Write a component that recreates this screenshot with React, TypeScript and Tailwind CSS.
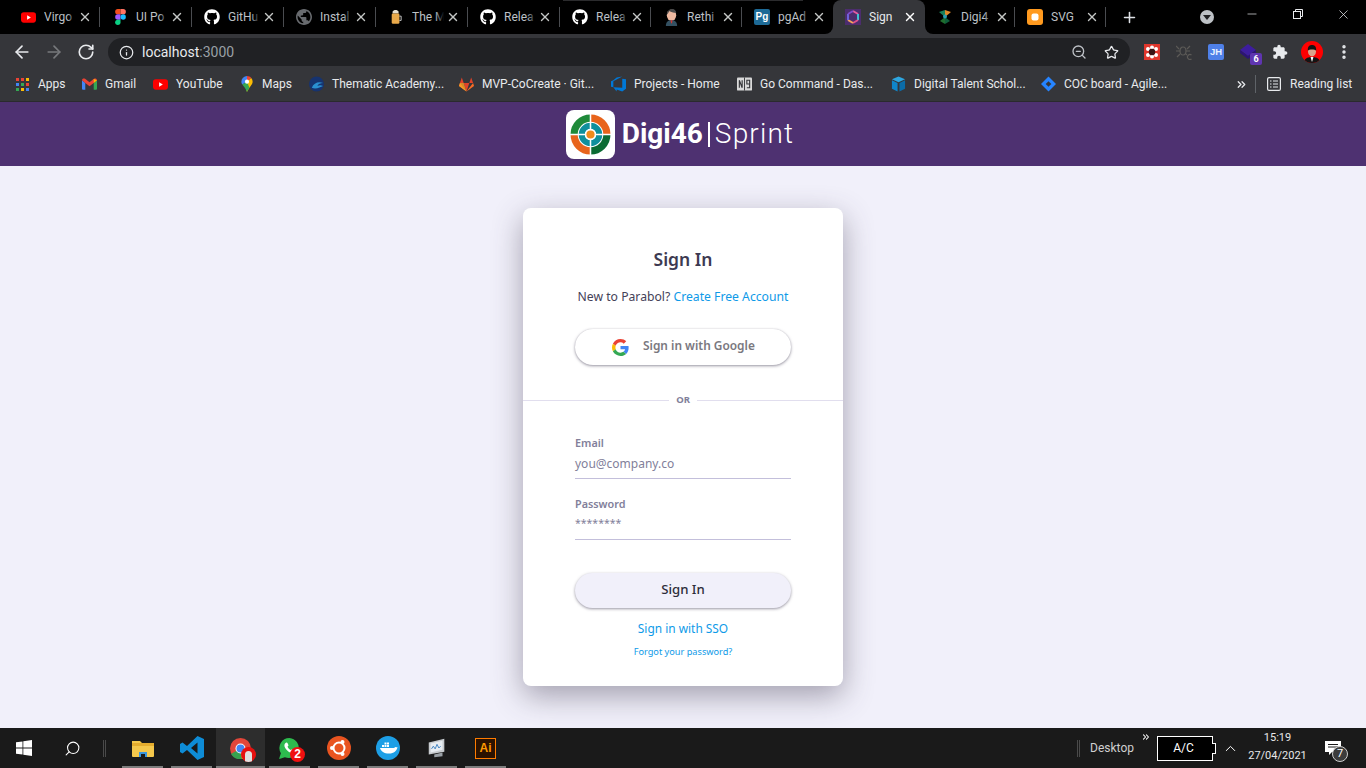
import { ArrowLeft, ArrowRight, RotateCw, Info, Search, ZoomOut, Star, EllipsisVertical, X, Plus, Minus, ChevronUp, ChevronsRight } from "lucide-react";
import { FaGithub } from "react-icons/fa";
import type { ReactNode } from "react";

const Youtube = () => (
    <svg viewBox="0 0 16 16" className="w-[15px] h-[15px]">
        <rect x="0" y="2.500" width="16" height="11" rx="3" fill="#f00" />
        <path d="M6.500 5.500v5l4-2.500z" fill="#fff" />
    </svg>
);

const Figma = () => (
    <svg viewBox="0 0 12 18" className="w-[11px] h-[16px]">
        <path d="M3 0h3v6H3a3 3 0 010-6z" fill="#f24e1e" />
        <path d="M6 0h3a3 3 0 010 6H6z" fill="#ff7262" />
        <path d="M3 6h3v6H3a3 3 0 010-6z" fill="#a259ff" />
        <circle cx="9" cy="9" r="3" fill="#1abcfe" />
        <path d="M3 12h3v3a3 3 0 11-3-3z" fill="#0acf83" />
    </svg>
);

const PublicGlobe = () => (
    <svg viewBox="2 2 20 20" className="w-4 h-4" fill="#686b6f">
        <path d="M12 2C6.480 2 2 6.480 2 12s4.480 10 10 10 10-4.480 10-10S17.520 2 12 2zm-1 17.930c-3.950-.490-7-3.850-7-7.930 0-.620.080-1.210.210-1.790L9 15v1c0 1.100.900 2 2 2v1.930zm6.900-2.540c-.260-.810-1-1.390-1.900-1.390h-1v-3c0-.550-.450-1-1-1H8v-2h2c.550 0 1-.450 1-1V7h2c1.100 0 2-.900 2-2v-.410c2.930 1.190 5 4.060 5 7.410 0 2.080-.800 3.970-2.100 5.390z" />
    </svg>
);

const Beer = () => (
    <svg viewBox="0 0 14 18" className="w-[12px] h-[16px]">
        <path d="M3 3c1-3 6-3 7 0v2H3z" fill="#e8e0d0" />
        <rect x="2" y="5" width="9" height="12" rx="1.500" fill="#e9a94a" />
        <path d="M11 8h2v5h-2" fill="none" stroke="#ddd" strokeWidth="1" />
    </svg>
);

const Jenkins = () => (
    <svg viewBox="0 0 16 18" className="w-[15px] h-[17px]">
        <ellipse cx="8" cy="6.500" rx="5" ry="6" fill="#eeb9a0" />
        <path d="M3 6c0-4 3-6 6-6s4 3 4 4c-3 0-6-1-7-2-1 1-2 3-3 4z" fill="#4a4a4a" />
        <path d="M2 18c0-4 2-6 6-6s6 2 6 6z" fill="#335061" />
        <path d="M7 12h2l-.5 3h-1z" fill="#d33833" />
    </svg>
);

const PgAdmin = () => (
    <span className="w-4 h-4 rounded-[2px] bg-[#1d6a96] text-white text-[10px] leading-4 font-bold text-center font-['Liberation_Sans',sans-serif]">Pg</span>
);

const ParabolMark = () => (
    <svg viewBox="0 0 16 16" className="w-4 h-4">
        <rect width="16" height="16" fill="#4c2d6e" />
        <path d="M8 2l5 3" stroke="#e55ca0" strokeWidth="2" fill="none" />
        <path d="M13 5v6" stroke="#3fc1d0" strokeWidth="2" fill="none" />
        <path d="M13 11l-5 3" stroke="#e0518a" strokeWidth="2" fill="none" />
        <path d="M8 14l-5-3" stroke="#f5a25d" strokeWidth="2" fill="none" />
        <path d="M3 11V5" stroke="#6e63d9" strokeWidth="2" fill="none" />
        <path d="M3 5l5-3" stroke="#7f4cc9" strokeWidth="2" fill="none" />
    </svg>
);

const DigiLeaf = () => (
    <svg viewBox="0 0 16 16" className="w-4 h-4">
        <path d="M8 8L2 3l6-2z" fill="#1a7f5a" />
        <path d="M8 8l6-5-6-2z" fill="#e08a2b" />
        <path d="M8 8L3 12l5 3z" fill="#1f6e2e" />
        <path d="M8 8l5 4-5 3z" fill="#0f5f3a" />
        <circle cx="8" cy="7.500" r="2" fill="#2a9db0" />
    </svg>
);

const SvgIcon = () => (
    <svg viewBox="0 0 16 16" className="w-4 h-4">
        <rect width="16" height="16" rx="3" fill="#ff9a1f" />
        <rect x="4.500" y="4.500" width="7" height="7" rx="2" fill="#fff" />
    </svg>
);

const Gmail = () => (
    <svg viewBox="0 0 16 12" className="w-[15px] h-[12px]">
        <path d="M0 2v9a1 1 0 001 1h2.500V5z" fill="#4285f4" />
        <path d="M16 2v9a1 1 0 01-1 1h-2.500V5z" fill="#34a853" />
        <path d="M0 2c0-1.800 2-2.500 3.300-1.500L8 4l4.700-3.500C14 -.5 16 .2 16 2l-3.500 3L8 8.300 3.500 5z" fill="#ea4335" />
        <path d="M12.500 .6L16 2l-3.500 3z" fill="#fbbc04" />
    </svg>
);

const Maps = () => (
    <svg viewBox="0 0 12 17" className="w-[12px] h-[16px]">
        <path d="M6 0a6 6 0 00-6 6c0 1.200.4 2.200 1 3l5-3z" fill="#4285f4" />
        <path d="M6 0c1.800 0 3.400.8 4.500 2L6 6z" fill="#ea4335" />
        <path d="M10.500 2A6 6 0 0112 6c0 3-4 6-6 11l-1-3 1-8z" fill="#fbbc04" />
        <path d="M1 9c1.500 2 3.500 4 5 8 .6-1.800 1.600-3 2.600-4.500L6 6z" fill="#34a853" />
        <circle cx="6" cy="6" r="2.200" fill="#fff" />
    </svg>
);

const Thematic = () => (
    <svg viewBox="0 0 16 16" className="w-4 h-4">
        <circle cx="8" cy="8" r="8" fill="#16336f" />
        <path d="M3 12c2-5 7-7 12-5-3 0-5 1-6 3 2-1 4-1 6 0-3 1-7 4-12 2z" fill="#2a8fd0" />
    </svg>
);

const Gitlab = () => (
    <svg viewBox="0 0 16 15" className="w-4 h-[15px]">
        <path d="M8 15L0 9l1-3z" fill="#fc6d26" />
        <path d="M8 15l8-6-1-3z" fill="#fc6d26" />
        <path d="M8 15L5 6h6z" fill="#e24329" />
        <path d="M1 6l2-6 2 6z" fill="#e24329" />
        <path d="M15 6l-2-6-2 6z" fill="#e24329" />
        <path d="M0 9l1-3 4 0 3 9z" fill="#fca326" opacity=".8" />
    </svg>
);

const AzureBoards = () => (
    <svg viewBox="0 0 16 16" className="w-4 h-4">
        <path d="M16 3v10l-4 3-6-2.200V16L2.500 11.500 12 12V2.500zM12 0L6 1 2.500 4 0 5v6l2.500 .5V5z" fill="#0078d7" />
    </svg>
);

const GoBook = () => (
    <svg viewBox="0 0 16 14" className="w-4 h-[14px]">
        <rect width="16" height="14" rx="1" fill="#d9d9d9" />
        <path d="M8 0v14" stroke="#35363a" strokeWidth="1" />
        <path d="M2.500 3v8M2.500 3l3 8M5.500 3v8M10.500 3h3v4h-3zM13.500 7v4h-3" stroke="#35363a" strokeWidth="1.200" fill="none" />
    </svg>
);

const BoxIcon = () => (
    <svg viewBox="0 0 16 16" className="w-4 h-4">
        <path d="M8 0l7 3-7 3-7-3z" fill="#2ea6e0" />
        <path d="M1 4l6 3v9l-6-3z" fill="#0f85c9" />
        <path d="M15 4L9 7v9l6-3z" fill="#0b6ca8" />
    </svg>
);

const Jira = () => (
    <svg viewBox="0 0 16 16" className="w-4 h-4">
        <path d="M8 0l8 8-8 8-8-8z" fill="#2684ff" />
        <path d="M8 5l3 3-3 3-3-3z" fill="#35363a" />
    </svg>
);

const AppsGrid = () => (
    <div className="grid grid-cols-3 gap-[2px] w-[13px]">
        {["#ea4335", "#ea4335", "#fbbc04", "#4285f4", "#34a853", "#ea4335", "#34a853", "#fbbc04", "#4285f4"].map((c, i) => (
            <svg key={i} viewBox="0 0 3 3" className="w-[3px] h-[3px]"><rect width="3" height="3" fill={c} /></svg>
        ))}
    </div>
);

const tabs: { icon: ReactNode; title: string; width: string; sep?: boolean }[] = [
    { icon: <Youtube />, title: "Virgo", width: "w-[92px]", sep: true },
    { icon: <Figma />, title: "UI Po", width: "w-[92px]", sep: true },
    { icon: <FaGithub className="w-4 h-4 text-white" />, title: "GitHu", width: "w-[92px]", sep: true },
    { icon: <PublicGlobe />, title: "Instal", width: "w-[92px]", sep: true },
    { icon: <Beer />, title: "The M", width: "w-[92px]", sep: true },
    { icon: <FaGithub className="w-4 h-4 text-white" />, title: "Relea", width: "w-[92px]", sep: true },
    { icon: <FaGithub className="w-4 h-4 text-white" />, title: "Relea", width: "w-[91px]", sep: true },
    { icon: <Jenkins />, title: "Rethi", width: "w-[91px]", sep: true },
    { icon: <PgAdmin />, title: "pgAd", width: "w-[91px]" },
];

const bookmarks: { icon: ReactNode; label: string; width: string }[] = [
    { icon: <AppsGrid />, label: "Apps", width: "w-[67px]" },
    { icon: <Gmail />, label: "Gmail", width: "w-[71px]" },
    { icon: <Youtube />, label: "YouTube", width: "w-[86px]" },
    { icon: <Maps />, label: "Maps", width: "w-[70px]" },
    { icon: <Thematic />, label: "Thematic Academy...", width: "w-[150px]" },
    { icon: <Gitlab />, label: "MVP-CoCreate · Git...", width: "w-[152px]" },
    { icon: <AzureBoards />, label: "Projects - Home", width: "w-[126px]" },
    { icon: <GoBook />, label: "Go Command - Das...", width: "w-[154px]" },
    { icon: <BoxIcon />, label: "Digital Talent Schol...", width: "w-[150px]" },
    { icon: <Jira />, label: "COC board - Agile...", width: "w-[200px]" },
];

function Tab({ icon, title, width, sep }: { icon: ReactNode; title: string; width: string; sep?: boolean }) {
    return (
        <div className={`${width} shrink-0 h-full flex items-center pl-[12px] relative`}>
            <span className="w-4 h-4 flex items-center justify-center shrink-0">{icon}</span>
            <span className="ml-2 w-[32px] relative overflow-hidden whitespace-nowrap text-[12px] text-[#bdc1c6]">
                {title}
                <span className="absolute inset-y-0 right-0 w-[9px] bg-gradient-to-r from-transparent to-black" />
            </span>
            <X className="w-[14px] h-[14px] text-[#c4c7c5] ml-[2px] shrink-0" strokeWidth={2.4} />
            {sep && <div className="absolute right-0 top-[7px] h-[20px] w-px bg-[#4a4c50]" />}
        </div>
    );
}

function TabStrip() {
    return (
        <div className="h-[34px] bg-black flex items-center pl-[8px] relative font-['Roboto',sans-serif]">
            <div className="absolute top-0 left-[563px] w-[240px] h-px bg-[#2b2b2d]" />
            {tabs.map((t, i) => (
                <Tab key={i} icon={t.icon} title={t.title} width={t.width} sep={t.sep} />
            ))}
            {/* active tab */}
            <div className="w-[92px] shrink-0 h-full flex items-center pl-[12px] bg-[#35363a] rounded-t-[8px] relative">
                <span className="absolute -left-[8px] bottom-0 w-[8px] h-[8px] bg-[#35363a]"><span className="block w-full h-full bg-black rounded-br-[8px]" /></span>
                <span className="absolute -right-[8px] bottom-0 w-[8px] h-[8px] bg-[#35363a]"><span className="block w-full h-full bg-black rounded-bl-[8px]" /></span>
                <ParabolMark />
                <span className="ml-[8px] w-[29px] relative overflow-hidden whitespace-nowrap text-[12px] text-[#e8eaed]">
                    Sign
                    <span className="absolute inset-y-0 right-0 w-[6px] bg-gradient-to-r from-transparent to-[#35363a]" />
                </span>
                <X className="w-[14px] h-[14px] text-white ml-[5px]" strokeWidth={2.4} />
            </div>
            <Tab icon={<DigiLeaf />} title="Digi4" width="w-[90px]" sep />
            <Tab icon={<SvgIcon />} title="SVG" width="w-[91px]" sep />
            <Plus className="w-[17px] h-[17px] text-[#dee1e6] ml-[15px]" strokeWidth={2.2} />
            <span className="ml-[62px] w-[14px] h-[14px] rounded-full bg-[#bdc1c6] flex items-center justify-center">
                <span className="w-0 h-0 border-l-[4px] border-r-[4px] border-t-[5px] border-l-transparent border-r-transparent border-t-[#202124]" />
            </span>
            <div className="ml-auto flex items-center h-full text-[#e8eaed] pb-[6px]">
                <Minus className="w-[14px] h-[14px] mr-[34px]" strokeWidth={1.2} />
                <svg viewBox="0 0 10 10" className="w-[10px] h-[10px] mr-[33px]" fill="none" stroke="#e8eaed" strokeWidth="1">
                    <rect x=".5" y="2.500" width="7" height="7" />
                    <path d="M2.500 2.500V.5h7v7H7.500" />
                </svg>
                <X className="w-[15px] h-[15px] mr-[15px]" strokeWidth={1.2} />
            </div>
        </div>
    );
}

function Toolbar() {
    return (
        <div className="h-[32px] bg-[#35363a] flex items-center pt-[4px] font-['Roboto',sans-serif]">
            <div className="w-[108px] flex items-center pl-[6px] shrink-0">
                <span className="w-8 flex justify-center"><ArrowLeft className="w-[20px] h-[20px] text-[#e8eaed]" strokeWidth={2} /></span>
                <span className="w-8 flex justify-center"><ArrowRight className="w-[20px] h-[20px] text-[#77797c]" strokeWidth={2} /></span>
                <span className="w-8 flex justify-center"><RotateCw className="w-[18px] h-[18px] text-[#e8eaed]" strokeWidth={2.2} /></span>
            </div>
            <div className="w-[1022px] h-[28px] bg-[#202124] rounded-full flex items-center px-[11px] shrink-0">
                <Info className="w-[15px] h-[15px] text-[#e8eaed]" />
                <span className="ml-[8px] text-[14px] text-[#e8eaed]">localhost<span className="text-[#9aa0a6]">:3000</span></span>
                <ZoomOut className="w-[16px] h-[16px] text-[#bdc1c6] ml-auto mr-[17px]" />
                <Star className="w-[15px] h-[15px] text-[#e8eaed]" />
            </div>
            <div className="flex items-center pl-[6px] flex-1">
                <span className="w-8 flex justify-center">
                    <svg viewBox="0 0 16 16" className="w-4 h-4">
                        <rect width="16" height="16" fill="#e0362c" />
                        <circle cx="4" cy="5" r="2" fill="#fff" /><circle cx="8" cy="3.500" r="2" fill="#fff" /><circle cx="12" cy="5" r="2" fill="#fff" />
                        <circle cx="4" cy="11" r="2" fill="#fff" /><circle cx="8" cy="12.500" r="2" fill="#fff" /><circle cx="12" cy="11" r="2" fill="#fff" />
                        <circle cx="8" cy="8" r="3.200" fill="#3a1515" />
                    </svg>
                </span>
                <span className="w-8 flex justify-center">
                    <svg viewBox="0 0 16 16" className="w-4 h-4" fill="none" stroke="#5c5a57" strokeWidth="1.200"><ellipse cx="7" cy="7" rx="3" ry="4" /><path d="M0 2l3 3M14 2l-3 3M0 7h4M14 7h-4M1 13l3-3M10 10l1 1" /><path d="M15.500 11a2.500 2.500 0 100 4" /></svg>
                </span>
                <span className="w-8 flex justify-center">
                    <span className="w-4 h-4 bg-[#4f80e8] rounded-[2px] text-[#e8f0ff] text-[9.500px] font-bold leading-4 text-center font-['Liberation_Sans',sans-serif]">JH</span>
                </span>
                <span className="w-8 flex justify-center">
                    <span className="relative w-4 h-4">
                        <svg viewBox="0 0 16 16" className="w-4 h-4"><path d="M8 0l8 6-8 6-8-6z" fill="#3d1d9e" /><path d="M0 6v3l8 6 8-6V6l-8 6z" fill="#2c1475" /></svg>
                        <span className="absolute left-[10px] top-[9px] w-[12px] h-[12px] bg-[#5f35b0] rounded-[2px] text-white text-[9px] leading-3 text-center font-bold">6</span>
                    </span>
                </span>
                <span className="w-8 flex justify-center">
                    <svg viewBox="0 0 24 24" className="w-[16px] h-[16px]" fill="#e8eaed">
                        <path d="M20.500 11H19V7c0-1.100-.9-2-2-2h-4V3.500C13 2.120 11.880 1 10.500 1S8 2.120 8 3.500V5H4c-1.100 0-1.990.9-1.990 2v3.800H3.500c1.490 0 2.700 1.210 2.700 2.700s-1.210 2.700-2.700 2.700H2V20c0 1.100.9 2 2 2h3.800v-1.500c0-1.490 1.210-2.700 2.700-2.700 1.490 0 2.700 1.210 2.700 2.700V22H17c1.100 0 2-.9 2-2v-4h1.500c1.380 0 2.500-1.120 2.500-2.500S21.880 11 20.500 11z" />
                    </svg>
                </span>
                <span className="w-8 flex justify-center">
                    <span className="w-[22px] h-[22px] rounded-full bg-[#f00] overflow-hidden block">
                        <svg viewBox="0 0 22 22" className="w-[22px] h-[22px]">
                            <path d="M3 22c0-4 3-6 8-6s8 2 8 6z" fill="#141414" />
                            <path d="M9.500 16h3L11 21z" fill="#fff" />
                            <ellipse cx="11" cy="10.500" rx="4" ry="5" fill="#d9a38a" />
                            <path d="M6.800 9.500C6.500 5 9 4 11 4s4.500 1 4.200 5.500C14 8 8 8 6.800 9.500z" fill="#141414" />
                        </svg>
                    </span>
                </span>
                <span className="w-8 flex justify-center">
                    <EllipsisVertical className="w-[18px] h-[18px] text-[#e8eaed]" strokeWidth={2.6} />
                </span>
            </div>
        </div>
    );
}

function BookmarksBar() {
    return (
        <div className="h-[36px] bg-[#35363a] flex items-center pl-[15px] pt-px border-b border-[#2a2a2e] font-['Roboto',sans-serif]">
            {bookmarks.map((b) => (
                <div key={b.label} className={`${b.width} shrink-0 flex items-center`}>
                    <span className="w-[15px] flex justify-center shrink-0">{b.icon}</span>
                    <span className="ml-[8px] text-[12px] text-[#e8eaed] whitespace-nowrap">{b.label}</span>
                </div>
            ))}
            <ChevronsRight className="w-[13px] h-[13px] text-[#e8eaed] -ml-[6px]" strokeWidth={2.4} />
            <div className="w-px h-[18px] bg-[#5f6368] ml-[7px]" />
            <svg viewBox="0 0 14 14" className="w-[14px] h-[14px] ml-[11px]" fill="none" stroke="#e8eaed" strokeWidth="1.200">
                <rect x=".6" y=".6" width="12.800" height="12.800" rx="1.500" />
                <path d="M3 4h1.500M6 4h5M3 7h1.500M6 7h5M3 10h1.500M6 10h5" />
            </svg>
            <span className="ml-[9px] text-[12px] text-[#e8eaed] whitespace-nowrap">Reading list</span>
        </div>
    );
}

function GoogleG() {
    return (
        <svg viewBox="0 0 48 48" className="w-[17px] h-[17px]">
            <path fill="#EA4335" d="M24 9.500c3.500 0 6.700 1.200 9.200 3.600l6.900-6.900C35.900 2.400 30.500 0 24 0 14.600 0 6.500 5.400 2.600 13.200l8 6.200C12.400 13.700 17.700 9.500 24 9.500z" />
            <path fill="#4285F4" d="M46.900 24.500c0-1.600-.1-3.100-.4-4.500H24v9h12.900c-.6 3-2.200 5.500-4.700 7.200l7.700 6c4.500-4.200 7-10.300 7-17.700z" />
            <path fill="#FBBC05" d="M10.500 28.600c-.5-1.400-.8-3-.8-4.600s.3-3.200.8-4.600l-8-6.200C.9 16.500 0 20.100 0 24s.9 7.500 2.600 10.800l7.900-6.200z" />
            <path fill="#34A853" d="M24 48c6.500 0 11.900-2.100 15.900-5.800l-7.700-6c-2.200 1.400-4.900 2.300-8.200 2.300-6.300 0-11.600-4.200-13.500-9.900l-8 6.200C6.500 42.600 14.600 48 24 48z" />
        </svg>
    );
}

function DigiLogo() {
    return (
        <div className="flex items-center justify-center h-[64px] bg-[#4e3171] pr-[6px] font-['Roboto',sans-serif]">
            <div className="w-[49px] h-[49px] bg-white rounded-[8px] flex items-center justify-center">
                <svg viewBox="0 0 40 40" className="w-[41px] h-[41px]">
                    <path d="M4 20A16 16 0 0120 4" fill="none" stroke="#1f8a3a" strokeWidth="7" />
                    <path d="M20 4a16 16 0 0116 16" fill="none" stroke="#e8641c" strokeWidth="7" />
                    <path d="M4 20a16 16 0 0016 16" fill="none" stroke="#e8641c" strokeWidth="7" />
                    <path d="M36 20a16 16 0 01-16 16" fill="none" stroke="#0b6b33" strokeWidth="7" />
                    <circle cx="20" cy="20" r="8.500" fill="none" stroke="#0f8f9c" strokeWidth="6" />
                    <path d="M20 0v40M0 20h40" stroke="#fff" strokeWidth="1.500" />
                    <circle cx="20" cy="20" r="5.500" fill="#fff" />
                    <circle cx="20" cy="20" r="4" fill="#f08a1d" />
                </svg>
            </div>
            <span className="ml-[7px] text-[28px] leading-none font-bold text-white">Digi46</span>
            <div className="w-[2px] h-[25px] bg-white ml-[5px]" />
            <span className="ml-[5px] text-[28px] leading-none font-light tracking-[1.2px] text-white">Sprint</span>
        </div>
    );
}

function Field({ label, value, stars }: { label: string; value: string; stars?: boolean }) {
    return (
        <div className="w-[216px]">
            <div className="text-[10.800px] leading-[14px] font-semibold text-[#82809a]">{label}</div>
            <div className={`h-[29px] border-b border-[#c3bfdb] text-[#82809a] ${stars ? "text-[10.500px] leading-[24px]" : "text-[12px] leading-[28px]"}`}>{value}</div>
        </div>
    );
}

function SignInCard() {
    return (
        <div className="w-[320px] h-[478px] bg-white rounded-[8px] shadow-[0_10px_30px_rgba(68,62,85,0.45)] flex flex-col items-center pt-[39px] font-['Noto_Sans',sans-serif]">
            <h1 className="text-[17.500px] leading-[24px] font-semibold text-[#3d3a52]">Sign In</h1>
            <p className="mt-[16px] text-[12.200px] leading-[20px] text-[#444258]">
                New to Parabol? <a className="text-[#0e9ae8]">Create Free Account</a>
            </p>
            <button className="mt-[22px] w-[216px] h-[36px] rounded-full bg-white shadow-[0_1px_3px_rgba(68,62,85,0.55),0_0_1px_rgba(68,62,85,0.2)] flex items-center pl-[37px]">
                <GoogleG />
                <span className="ml-[14px] mb-[2px] text-[11.900px] font-semibold text-[#7a7880]">Sign in with Google</span>
            </button>
            <div className="mt-[27px] w-full flex items-center">
                <div className="h-px flex-1 bg-[#e1deee]" />
                <span className="mx-[7px] text-[9.500px] leading-[16px] font-bold text-[#82809a]">OR</span>
                <div className="h-px flex-1 bg-[#e1deee]" />
            </div>
            <div className="mt-[28px] flex flex-col gap-[18px]">
                <Field label="Email" value="you@company.co" />
                <Field label="Password" value="********" stars />
            </div>
            <button className="mt-[33px] w-[216px] h-[35px] pb-[2px] rounded-full bg-[#f1f0fa] shadow-[0_1px_3px_rgba(68,62,85,0.55)] text-[13.200px] font-medium text-[#2d2d39]">Sign In</button>
            <a className="mt-[10px] text-[11.900px] leading-[20px] text-[#0e9ae8]">Sign in with SSO</a>
            <a className="mt-[6px] text-[9.200px] leading-[16px] text-[#0e9ae8]">Forgot your password?</a>
        </div>
    );
}

function Taskbar() {
    const icons: ReactNode[] = [
        <svg viewBox="0 0 22 20" className="w-[22px] h-[20px]"><path d="M0 3h8l2 2h12v13a1 1 0 01-1 1H1a1 1 0 01-1-1z" fill="#f5c84c" /><rect x="0" y="5" width="22" height="3" fill="#e5ad2e" /><path d="M7 19v-5h8v5" fill="#3a96dd" /><rect x="9" y="16" width="4" height="3" fill="#1a1a1a" /></svg>,
        <svg viewBox="0 0 24 24" className="w-[24px] h-[24px]"><path d="M17.500 0L24 3v18l-6.500 3L7 14l-4.500 3.500L0 16V8l2.500-1.500L7 10zM17.500 6.500L11 12l6.500 5.500z" fill="#0e8cd6" /></svg>,
        <span className="relative w-[21px] h-[21px] block"><svg viewBox="0 0 21 21" className="w-[21px] h-[21px]"><circle cx="10.500" cy="10.500" r="10.500" fill="#e2463a" /><path d="M10.500 10.500L1 16a10.500 10.500 0 0011 5z" fill="#37a24f" /><path d="M10.500 10.500L21 10.500a10.500 10.500 0 01-9 10.500z" fill="#f7c325" /><circle cx="10.500" cy="10.500" r="5" fill="#fff" /><circle cx="10.500" cy="10.500" r="4" fill="#4285f4" /></svg><span className="absolute -right-[5px] -bottom-[3px] w-[15px] h-[15px] rounded-full bg-[#e5100f] flex justify-center items-end overflow-hidden"><span className="w-[7px] h-[11px] bg-[#e0e0e0] rounded-t-full" /></span></span>,
        <span className="relative w-[21px] h-[21px] block"><svg viewBox="0 0 21 21" className="w-[21px] h-[21px]"><path d="M10.500 0a10 10 0 00-8.600 15.200L0 21l5.900-1.800A10 10 0 1010.500 0z" fill="#2dbb4e" /><path d="M6.500 5c1-1 2-.5 2.500 1l.5 1.500-1 1.200c.7 1.500 1.800 2.600 3.300 3.300l1.200-1 1.500.5c1.500.5 2 1.500 1 2.500-2 2-5 .7-7.500-1.800S4.500 7 6.500 5z" fill="#fff" /></svg><span className="absolute -right-[5px] -bottom-[3px] w-[15px] h-[15px] rounded-full bg-[#f01010] text-white text-[12px] leading-[15px] text-center font-bold font-['Liberation_Sans',sans-serif]">2</span></span>,
        <svg viewBox="0 0 24 24" className="w-[24px] h-[24px]"><circle cx="12" cy="12" r="12" fill="#e95420" /><circle cx="12" cy="12" r="5.500" fill="none" stroke="#fff" strokeWidth="2" /><circle cx="5" cy="12" r="2" fill="#fff" /><circle cx="15.500" cy="5.900" r="2" fill="#fff" /><circle cx="15.500" cy="18.100" r="2" fill="#fff" /></svg>,
        <svg viewBox="0 0 24 24" className="w-[24px] h-[24px]"><circle cx="12" cy="12" r="12" fill="#1d9fe6" /><path d="M4 12h13c1 0 2-.5 2.500-1 .8.300 1.500.5 2 .2-.8 3.500-3.500 6.300-8.500 6.300-5 0-8-2-9-5.500z" fill="#fff" /><path d="M6 9h2v2H6zM8.500 9h2v2h-2zM11 9h2v2h-2zM8.500 6.500h2v2h-2zM11 6.500h2v2h-2z" fill="#fff" /></svg>,
        <svg viewBox="0 0 24 24" className="w-[24px] h-[22px]"><path d="M3 6l17-4v14L3 19z" fill="#c8ccd0" /><path d="M5 7l13-3v10L5 17z" fill="#e8edf2" /><path d="M6 13l2-3 2 3 2-5 2 4 2-2" fill="none" stroke="#3a7fc0" strokeWidth="1" /><path d="M9 19l9-2v4l-9 1z" fill="#9aa0a6" /></svg>,
        <span className="w-[21px] h-[21px] bg-[#2b1200] border-[1.500px] border-[#ff7c00] text-[#ff9a00] text-[12px] leading-[18px] text-center font-['Liberation_Sans',sans-serif] font-bold block">Ai</span>,
    ];

    return (
        <div className="h-[40px] bg-[#1a1a1a] flex items-center font-['Roboto',sans-serif] shrink-0">
            <div className="w-[48px] flex justify-center">
                <svg viewBox="0 0 16 16" className="w-[16px] h-[16px]" fill="#fff"><path d="M0 2.300L6.500 1.400v6.200H0zM7.300 1.300L16 0v7.600H7.300zM0 8.400h6.500v6.200L0 13.700zM7.300 8.400H16V16l-8.700-1.300z" /></svg>
            </div>
            <div className="w-[48px] flex justify-center">
                <Search className="w-[17px] h-[17px] text-white -scale-x-100" strokeWidth={1.5} />
            </div>
            <div className="w-[3px] h-[17px] border-x border-[#4a4a4a] ml-[7px] mr-[12px]" />
            {icons.map((icon, i) => (
                <div key={i} className={`w-[49px] h-full flex items-center justify-center relative ${i === 2 ? "bg-[#2d2d2d]" : ""}`}>
                    {icon}
                    <div className={`absolute bottom-0 h-[2px] bg-[#7d7d7d] ${i === 2 ? "left-0 right-0" : "left-[4px] right-[4px]"}`} />
                </div>
            ))}
            <div className="ml-auto flex items-center h-full text-white">
                <div className="w-[3px] h-[17px] border-x border-[#4a4a4a]" />
                <span className="ml-[10px] text-[12px] text-[#d0d0d0]">Desktop</span>
                <ChevronsRight className="w-[10px] h-[10px] ml-[7px] mb-[22px]" strokeWidth={2.5} />
                <div className="ml-[6px] relative w-[56px] h-[25px] border border-white bg-black flex items-center justify-center text-[12px] pr-[3px]">
                    A/C
                    <span className="absolute -right-[4px] top-[6px] w-[4px] h-[11px] border border-l-0 border-white bg-black" />
                </div>
                <ChevronUp className="w-[17px] h-[17px] ml-[9px]" strokeWidth={1.4} />
                <div className="ml-[4px] w-[69px] flex flex-col items-center text-[11px] leading-[18px] mb-[2px] text-[#e8e8e8]">
                    <span>15:19</span>
                    <span>27/04/2021</span>
                </div>
                <div className="relative w-[20px] ml-[13px] mr-[21px]">
                    <svg viewBox="0 0 16 14" className="w-[16px] h-[14px]" fill="#fff"><path d="M0 0h16v11H7l-3 3v-3H0z" /><path d="M3 3.500h10M3 6h10" stroke="#1a1a1a" /></svg>
                    <span className="absolute left-[7px] top-[5px] w-[16px] h-[16px] rounded-full bg-[#3c3c3c] border border-[#cfcfcf] text-[11px] leading-[14px] text-center">7</span>
                </div>
            </div>
        </div>
    );
}

export default function App() {
    return (
        <div className="w-[1366px] h-[768px] flex flex-col overflow-hidden bg-[#f1f0fa] font-['Noto_Sans',sans-serif]">
            <TabStrip />
            <Toolbar />
            <BookmarksBar />
            <DigiLogo />
            <main className="flex-1 flex justify-center pt-[42px]">
                <SignInCard />
            </main>
            <Taskbar />
        </div>
    );
}
